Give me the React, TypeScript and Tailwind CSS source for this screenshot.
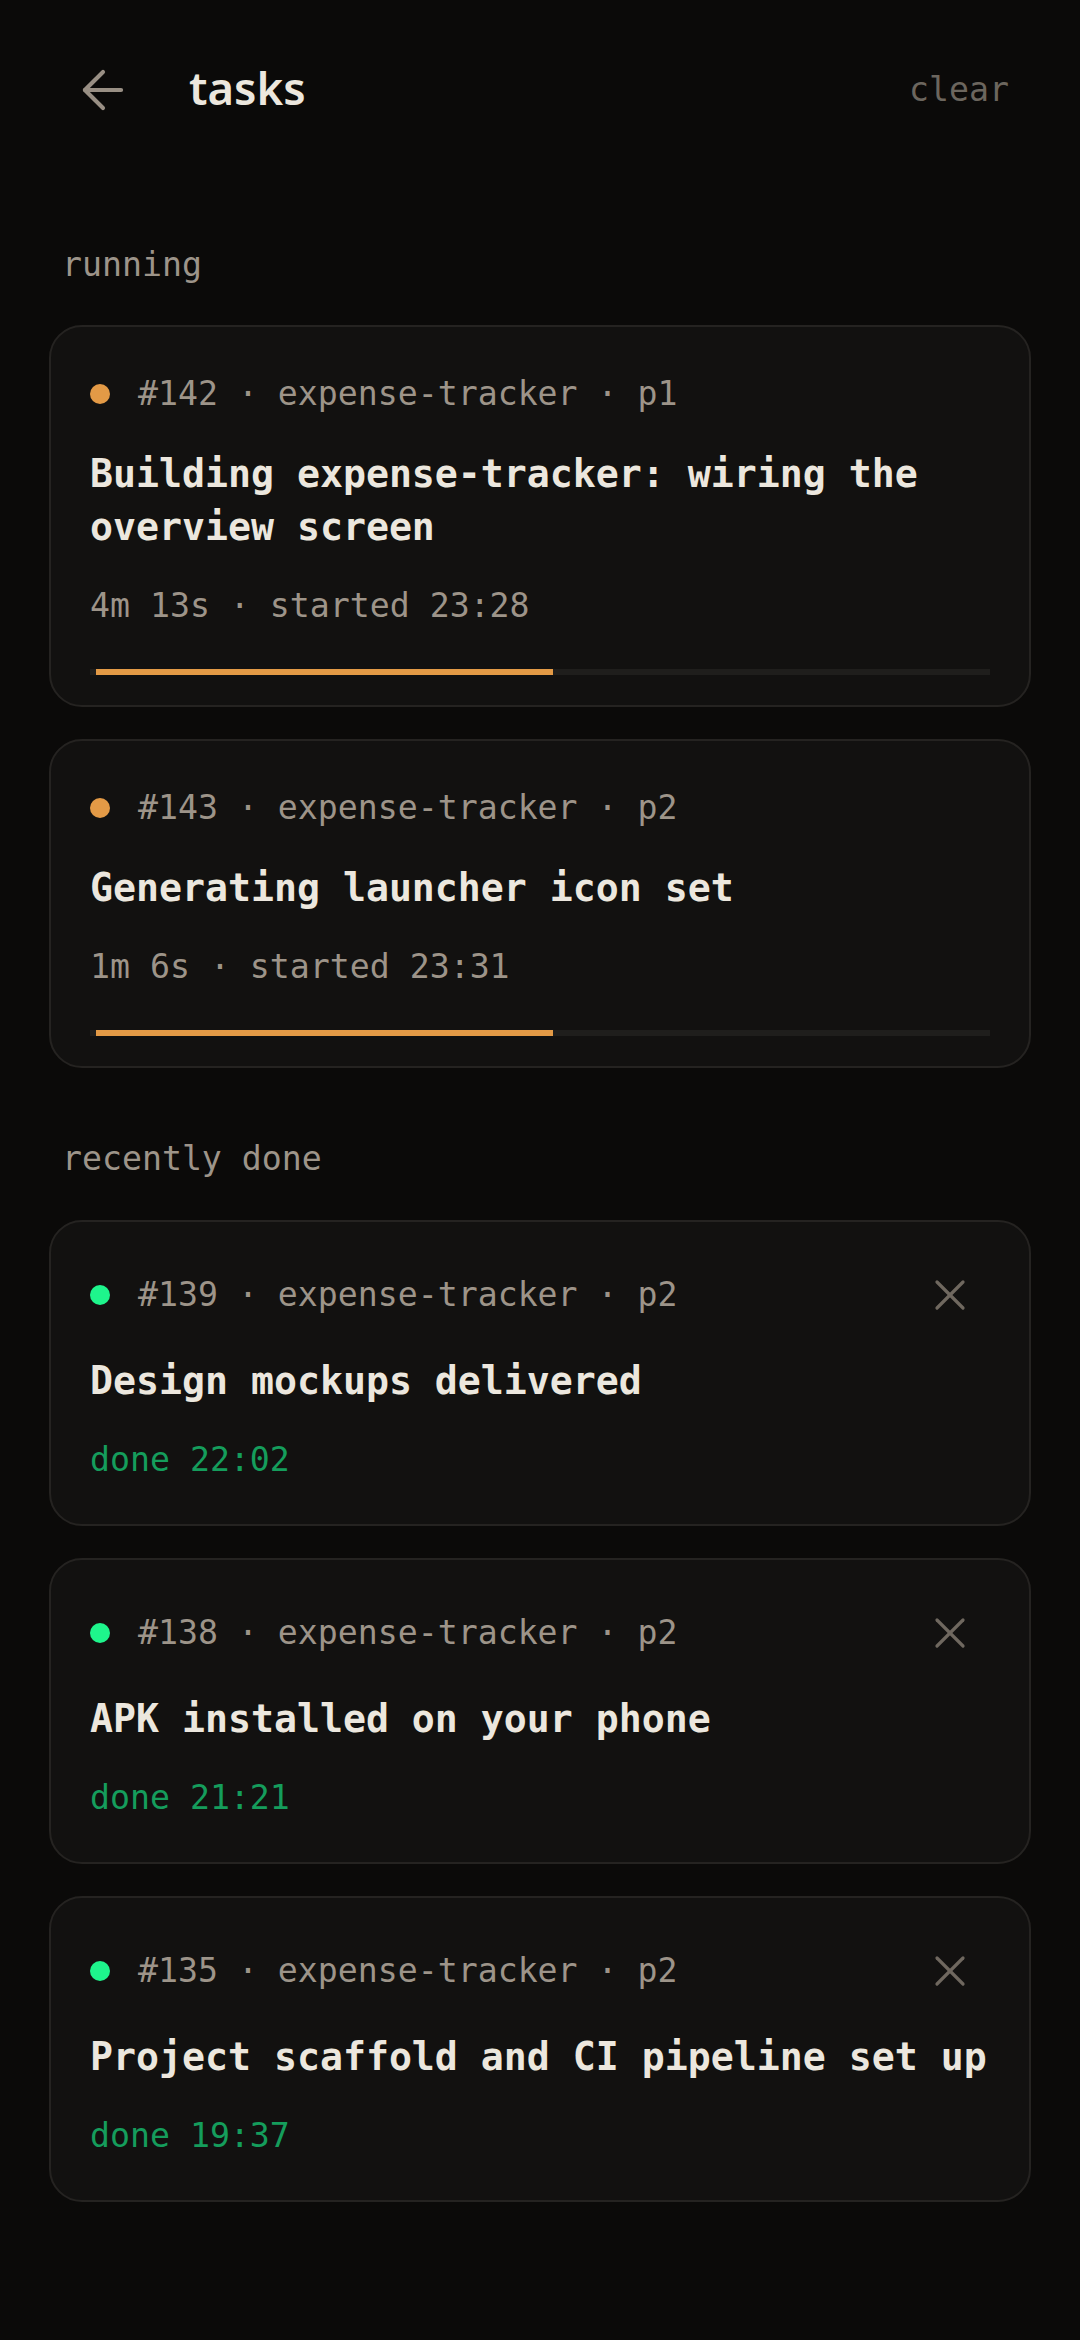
import { ArrowLeft, X } from "lucide-react";

type Task = {
  id: number;
  project: string;
  priority: string;
  title: string;
  sub: string;
};

const running: Task[] = [
  {
    id: 142,
    project: "expense-tracker",
    priority: "p1",
    title: "Building expense-tracker: wiring the overview screen",
    sub: "4m 13s · started 23:28",
  },
  {
    id: 143,
    project: "expense-tracker",
    priority: "p2",
    title: "Generating launcher icon set",
    sub: "1m 6s · started 23:31",
  },
];

const done: Task[] = [
  { id: 139, project: "expense-tracker", priority: "p2", title: "Design mockups delivered", sub: "done 22:02" },
  { id: 138, project: "expense-tracker", priority: "p2", title: "APK installed on your phone", sub: "done 21:21" },
  { id: 135, project: "expense-tracker", priority: "p2", title: "Project scaffold and CI pipeline set up", sub: "done 19:37" },
];

const Meta = ({ task, dot }: { task: Task; dot: string }) => (
  <div className="flex items-center">
    <span className={`w-[20px] h-[20px] rounded-full mr-[28px] ${dot}`} />
    <span className="text-[33.2px] leading-[44px] text-[#9d9489] whitespace-pre">
      {`#${task.id} · ${task.project} · ${task.priority}`}
    </span>
  </div>
);

const RunningCard = ({ task }: { task: Task }) => (
  <div className="rounded-[33px] border-2 border-[#252321] bg-[#121110] px-[39px] pt-[45px] pb-[30px]">
    <div className="h-[44px] flex items-center">
      <Meta task={task} dot="bg-[#e39a46]" />
    </div>
    <p className="mt-[32px] text-[38.2px] leading-[53px] font-bold text-[#ece7de]">{task.title}</p>
    <p className="mt-[30px] text-[33.2px] leading-[44px] text-[#9d9489] whitespace-pre">{task.sub}</p>
    <div className="mt-[41px] h-[6px] bg-[#1f1e1c] flex">
      <div className="ml-[6px] w-[457px] h-full bg-[#e39a46]" />
    </div>
  </div>
);

const DoneCard = ({ task }: { task: Task }) => (
  <div className="rounded-[33px] border-2 border-[#252321] bg-[#121110] px-[39px] pt-[45px] pb-[42px]">
    <div className="h-[56px] flex items-center justify-between">
      <Meta task={task} dot="bg-[#1ef58c]" />
      <button className="w-[80px] h-[56px] flex items-center justify-center text-[#6f685f]">
        <X size={52} strokeWidth={1.5} />
      </button>
    </div>
    <p className="mt-[32px] text-[38.2px] leading-[53px] font-bold text-[#ece7de]">{task.title}</p>
    <p className="mt-[30px] text-[33.2px] leading-[44px] text-[#159d5c]">{task.sub}</p>
  </div>
);

export default function App() {
  return (
    <div className="min-h-[2340px] bg-[#0b0a09] font-['DejaVu_Sans_Mono',monospace]">
      <header className="flex items-center h-[180px] pl-[72px] pr-[71px]">
        <ArrowLeft size={62} strokeWidth={1.6} className="text-[#998f84]" />
        <h1 className="ml-[55px] mb-[4px] font-['Noto_Sans',sans-serif] font-semibold text-[45.5px] leading-none text-[#ece7de]">
          tasks
        </h1>
        <button className="ml-auto text-[33.2px] leading-none text-[#6c665e]">clear</button>
      </header>

      <main className="px-[49px] pb-[100px]">
        <h2 className="mt-[63px] pl-[13px] text-[33.2px] leading-[44px] text-[#9d9489]">running</h2>
        <div className="mt-[38px] flex flex-col gap-[32px]">
          {running.map((t) => (
            <RunningCard key={t.id} task={t} />
          ))}
        </div>

        <h2 className="mt-[69px] pl-[13px] text-[33.2px] leading-[44px] text-[#9d9489]">recently done</h2>
        <div className="mt-[39px] flex flex-col gap-[32px]">
          {done.map((t) => (
            <DoneCard key={t.id} task={t} />
          ))}
        </div>
      </main>
    </div>
  );
}
